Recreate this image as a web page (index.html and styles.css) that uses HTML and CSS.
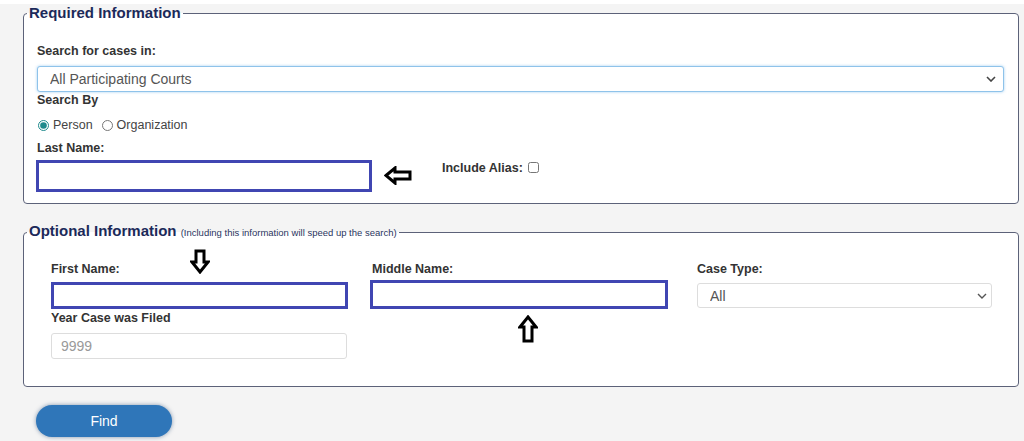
FILE: index.html
```html
<!DOCTYPE html>
<html lang="en">
<head>
  <meta charset="UTF-8">
  <meta name="viewport" content="width=device-width, initial-scale=1.0">
  <title>Case Search</title>
  <link rel="stylesheet" href="styles.css">
</head>
<body>
  <div class="page">
    <form class="search-form">

      <!-- Required Information -->
      <fieldset class="panel required">
        <legend class="panel-title">Required Information</legend>

        <label class="field-label" for="court">Search for cases in:</label>
        <div class="select-wrap court">
          <select id="court" class="select focused">
            <option>All Participating Courts</option>
          </select>
          <svg class="chevron" width="10" height="6" viewBox="0 0 10 6"><path d="M1 1 L5 5 L9 1" fill="none" stroke="#444" stroke-width="1.6"/></svg>
        </div>

        <div class="field-label search-by">Search By</div>
        <div class="radio-row">
          <label class="radio"><input type="radio" name="search-by" checked> Person</label>
          <label class="radio"><input type="radio" name="search-by"> Organization</label>
        </div>

        <label class="field-label last-label" for="last-name">Last Name:</label>
        <div class="last-row">
          <input type="text" id="last-name" class="text-input marked last-name">
          <svg class="arrow-left" width="28" height="19" viewBox="0 0 28 19"><path d="M2 9.5 L11 2 L11 6 L26 6 L26 13 L11 13 L11 17 Z" fill="#fff" stroke="#000" stroke-width="3"/></svg>
          <label class="alias">Include Alias: <input type="checkbox" class="alias-box"></label>
        </div>
      </fieldset>

      <!-- Optional Information -->
      <fieldset class="panel optional">
        <legend class="panel-title">Optional Information <span class="hint">(Including this information will speed up the search)</span></legend>

        <div class="optional-grid">
          <div class="col">
            <label class="field-label" for="first-name">First Name:</label>
            <input type="text" id="first-name" class="text-input marked">
            <svg class="arrow-down" width="20" height="25" viewBox="0 0 20 25"><path d="M6 2 H14 V13 H18 L10 23 L2 13 H6 Z" fill="#fff" stroke="#000" stroke-width="3"/></svg>
            <label class="field-label year-label" for="year">Year Case was Filed</label>
            <input type="text" id="year" class="text-input plain" placeholder="9999">
          </div>
          <div class="col">
            <label class="field-label" for="middle-name">Middle Name:</label>
            <input type="text" id="middle-name" class="text-input marked middle">
            <svg class="arrow-up" width="20" height="28" viewBox="0 0 20 28"><path d="M10 2 L18 12 H14 V26 H6 V12 H2 Z" fill="#fff" stroke="#000" stroke-width="3"/></svg>
          </div>
          <div class="col">
            <label class="field-label" for="case-type">Case Type:</label>
            <div class="select-wrap case-type">
              <select id="case-type" class="select">
                <option>All</option>
              </select>
              <svg class="chevron" width="10" height="6" viewBox="0 0 10 6"><path d="M1 1 L5 5 L9 1" fill="none" stroke="#555" stroke-width="1.4"/></svg>
            </div>
          </div>
        </div>
      </fieldset>

      <button type="button" class="find-btn">Find</button>
    </form>
  </div>
</body>
</html>
```

FILE: styles.css
```css
html, body { margin: 0; padding: 0; }
body { font-family: "Liberation Sans", Arial, sans-serif; background: #f4f4f4; color: #333; }
.page { border-top: 4px solid #fff; padding: 0 5px 0 23px; height: 437px; overflow: hidden; }

.panel { margin: 0; background: #fff; border: 1px solid #5c6279; border-radius: 4px; padding: 22px 14px 11px 13px; min-width: 0; }
.panel.optional { margin-top: 18px; padding-top: 20px; padding-bottom: 27px; }
.panel-title { font-size: 15px; font-weight: bold; line-height: 18px; color: #1c2a5a; padding: 0 2px; margin-left: -10px; }
.hint { font-size: 9.5px; font-weight: normal; color: #2a3560; }

.field-label { display: block; font-size: 12.5px; font-weight: bold; line-height: 14px; color: #333; }
.search-by { margin-top: 1px; }
.last-label { margin-top: 9px; }

.select-wrap { position: relative; }
.select-wrap .chevron { position: absolute; top: 50%; margin-top: -3px; pointer-events: none; }
.select { appearance: none; -webkit-appearance: none; width: 100%; box-sizing: border-box; font-family: inherit; font-size: 14px; color: #555; background: #fff; border: 1px solid #ddd; border-radius: 3px; padding: 0 12px; outline: none; }
.court { margin-top: 8px; }
.court .select { height: 26px; border-color: #8fc3ea; box-shadow: 0 0 3px rgba(102, 175, 233, 0.6); }
.court .chevron { right: 8px; }
.case-type { margin-top: 7px; width: 295px; }
.case-type .select { height: 25px; }
.case-type .chevron { right: 5px; }

.radio-row { display: flex; gap: 8px; margin-top: 11px; font-size: 12.5px; line-height: 14px; color: #444; }
.radio { display: flex; align-items: center; }
.radio input { width: 11px; height: 11px; margin: 0 4px 0 1px; accent-color: #1f8a8c; }

.text-input { display: block; box-sizing: border-box; font-family: inherit; font-size: 14px; background: #fff; outline: none; margin: 6px 0 0; }
.text-input.marked { border: 3px solid #4046b2; border-radius: 0; height: 27px; width: 297px; padding: 0 6px; }
.text-input.plain { border: 1px solid #ddd; border-radius: 3px; height: 26px; width: 296px; padding: 0 9px; margin-top: 8px; color: #555; }
.text-input.plain::placeholder { color: #999; }

.last-row { display: flex; align-items: flex-start; margin-top: 5px; }
.text-input.last-name { width: 336px; height: 32px; margin: 0 0 0 -1px; }
.arrow-left { margin: 6px 0 0 12px; }
.alias { display: flex; align-items: center; margin: 1px 0 0 30px; font-size: 12.5px; font-weight: bold; line-height: 14px; color: #333; }
.alias-box { width: 11px; height: 11px; margin: 0 0 2px 5px; }

.optional-grid { display: grid; grid-template-columns: 321px 325px 323px; padding-left: 14px; }
.col { position: relative; }
.year-label { margin-top: 2px; }
.text-input.middle { width: 298px; margin-left: -2px; margin-top: 4px; height: 29px; }
.arrow-down { position: absolute; left: 139px; top: -13px; }
.arrow-up { position: absolute; left: 146px; top: 53px; }

.find-btn { display: block; margin: 18px 0 0 13px; width: 136px; height: 32px; border: none; border-radius: 16px; background: #2f76b9; color: #fff; font-family: inherit; font-size: 14px; cursor: pointer; box-shadow: 0 0 4px rgba(20, 60, 110, 0.5); }
```
